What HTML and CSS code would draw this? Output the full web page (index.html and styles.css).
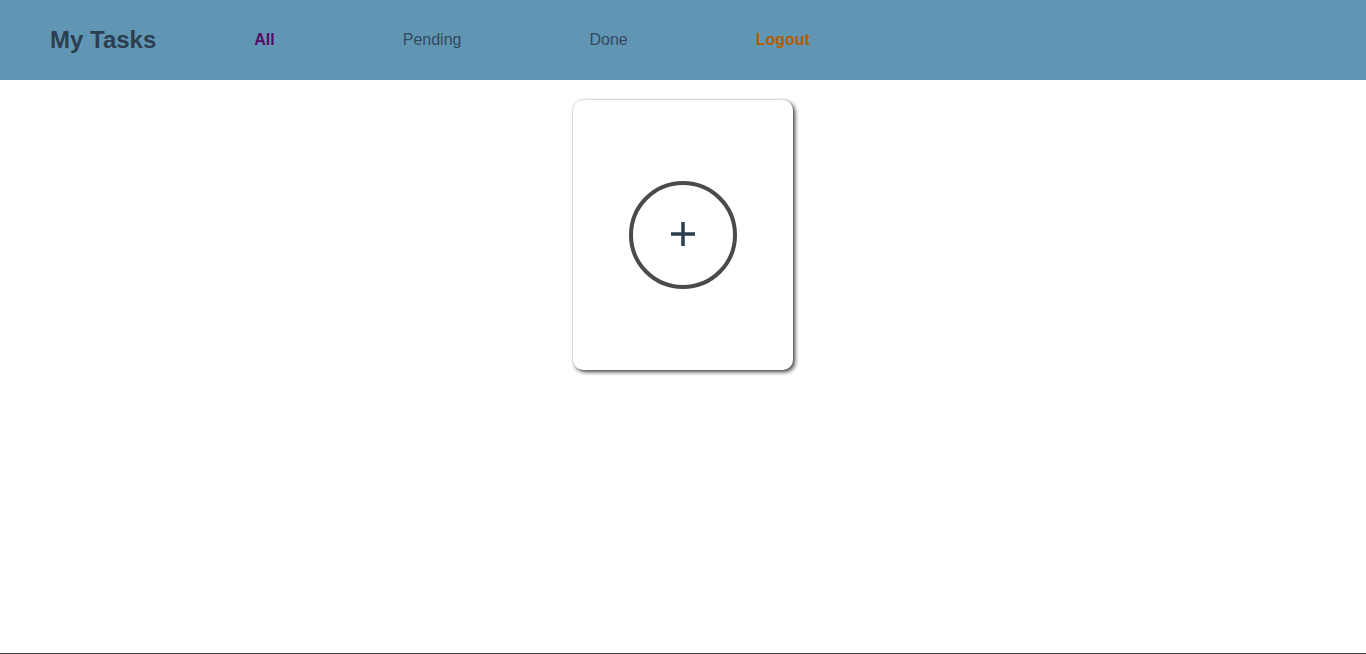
FILE: index.html
```html
<!DOCTYPE html>
<html>
<head>
<meta charset="utf-8">
<link rel="stylesheet" href="styles.css">
</head>
<body>
<div class="page">
  <header class="topbar">
    <h1 class="brand">My Tasks</h1>
    <nav class="nav">
      <a class="nav-link active" href="#">All</a>
      <a class="nav-link" href="#">Pending</a>
      <a class="nav-link" href="#">Done</a>
      <a class="nav-link logout" href="#">Logout</a>
    </nav>
  </header>
  <main class="content">
    <div class="card">
      <div class="add-btn">
        <svg class="plus" width="28" height="28" viewBox="0 0 28 28" aria-hidden="true">
          <path d="M14 2v24M2 14h24" stroke="#2c3e50" stroke-width="3.5" fill="none"/>
        </svg>
      </div>
    </div>
  </main>
  <footer class="footer"></footer>
</div>
</body>
</html>
```
FILE: styles.css
```css
html, body {
  margin: 0;
  padding: 0;
}
body {
  font-family: "Liberation Sans", Arial, sans-serif;
  background: #fff;
}
.page {
  display: flex;
  flex-direction: column;
  min-height: 100vh;
}
.topbar {
  height: 80px;
  background: #6096b4;
  display: flex;
  align-items: center;
  padding-left: 50px;
  box-sizing: border-box;
}
.brand {
  margin: 0 98px 0 0;
  font-size: 24px;
  font-weight: bold;
  color: #2c3e50;
  line-height: 1;
}
.nav {
  display: flex;
  gap: 128px;
  align-items: center;
}
.nav-link {
  font-size: 16px;
  text-decoration: none;
  color: #34495e;
}
.nav-link.active {
  color: #560a60;
  font-weight: bold;
}
.nav-link.logout {
  color: #b35d00;
  font-weight: bold;
}
.content {
  flex: 1;
  display: flex;
  justify-content: center;
  align-items: flex-start;
  padding-top: 20px;
}
.card {
  width: 220px;
  height: 270px;
  background: #fff;
  border-radius: 10px;
  box-shadow: 2px 2px 4px rgba(0,0,0,0.75), 0 0 2px rgba(0,0,0,0.2);
  display: flex;
  justify-content: center;
  padding-top: 81px;
  box-sizing: border-box;
}
.add-btn {
  width: 108px;
  height: 108px;
  border: 4px solid #4a4a4a;
  border-radius: 50%;
  box-sizing: border-box;
  display: flex;
  align-items: center;
  justify-content: center;
}
.plus {
  margin-top: -2px;
}
.footer {
  height: 1px;
  background: #444;
}
```
